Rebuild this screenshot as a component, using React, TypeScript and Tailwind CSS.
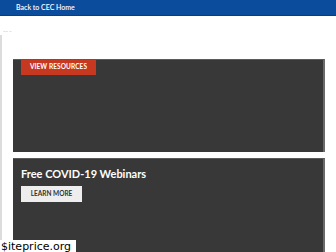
import React from 'react'

export default function App() {
  return (
    <div className="relative w-[336px] h-[252px] overflow-hidden bg-white font-['Lato',sans-serif]">
      {/* Top bar */}
      <div className="h-[16px] bg-[#0b4d9c] border-b border-[#083f82] flex items-center pl-[16px]">
        <span className="text-[7px] font-semibold text-white leading-none">Back to CEC Home</span>
      </div>

      <div className="flex">
        <div className="w-[2px] mt-[19px] bg-[#dcdcdc]" />
        <div className="flex-1">
          {/* tiny nav */}
          <div className="h-[43px] pl-[1px] pt-[15px]">
            <span className="block text-[3px] leading-none text-[#888]">——&nbsp;&nbsp;—</span>
          </div>

          {/* Panel 1 */}
          <div className="ml-[11px] mr-[11px] h-[93px] bg-[#383838] border-t border-[#5a5a5a] border-r-2 border-r-[#6a6a6a]">
            <div className="ml-[8px] w-[75px] h-[15px] bg-[#c6381f] flex items-center justify-center">
              <span className="text-[6.5px] font-bold text-white leading-none tracking-[0.1px]">VIEW RESOURCES</span>
            </div>
          </div>

          <div className="h-[6px]" />

          {/* Panel 2 */}
          <div className="ml-[11px] mr-[11px] h-[100px] bg-[#383838] border-t border-[#5a5a5a] border-r-2 border-r-[#6a6a6a] pl-[8px] pt-[9px]">
            <h2 className="text-[11px] font-bold text-white leading-none">Free COVID-19 Webinars</h2>
            <div className="mt-[7px] w-[61px] h-[16px] bg-[#eeeeee] flex items-center justify-center">
              <span className="text-[6.5px] font-bold text-[#333] leading-none">LEARN MORE</span>
            </div>
          </div>
        </div>
      </div>

      {/* watermark */}
      <div className="absolute left-0 bottom-0 w-[76px] h-[12px] bg-white flex items-center pl-[1px]">
        <span className="text-[11px] leading-none text-black font-['DejaVu_Sans',sans-serif]">$iteprice.org</span>
      </div>
    </div>
  )
}
